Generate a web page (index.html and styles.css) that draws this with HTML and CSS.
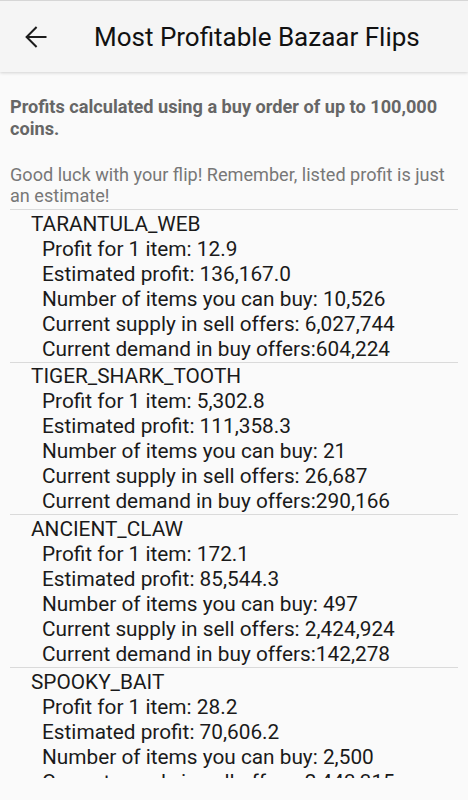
FILE: index.html
```html
<!DOCTYPE html>
<html lang="en">
<head>
<meta charset="utf-8">
<title>Most Profitable Bazaar Flips</title>
<link rel="stylesheet" href="styles.css">
</head>
<body>
<div class="screen">
  <header class="appbar">
    <svg class="back" viewBox="0 0 22 22" width="22" height="22" aria-hidden="true">
      <path d="M21.5 11H1.8M11.6 1L1.6 11l10 10" fill="none" stroke="#1c1c1c" stroke-width="2" stroke-linecap="butt" stroke-linejoin="miter"/>
    </svg>
    <h1 class="title">Most Profitable Bazaar Flips</h1>
  </header>
  <main class="content">
    <p class="note-bold">Profits calculated using a buy order of up to 100,000 coins.</p>
    <p class="note">Good luck with your flip! Remember, listed profit is just an estimate!</p>
    <div class="list">
      <section class="item">
        <div class="name">TARANTULA_WEB</div>
        <div class="line">Profit for 1 item: 12.9</div>
        <div class="line">Estimated profit: 136,167.0</div>
        <div class="line">Number of items you can buy: 10,526</div>
        <div class="line">Current supply in sell offers: 6,027,744</div>
        <div class="line">Current demand in buy offers:604,224</div>
      </section>
      <section class="item">
        <div class="name">TIGER_SHARK_TOOTH</div>
        <div class="line">Profit for 1 item: 5,302.8</div>
        <div class="line">Estimated profit: 111,358.3</div>
        <div class="line">Number of items you can buy: 21</div>
        <div class="line">Current supply in sell offers: 26,687</div>
        <div class="line">Current demand in buy offers:290,166</div>
      </section>
      <section class="item">
        <div class="name">ANCIENT_CLAW</div>
        <div class="line">Profit for 1 item: 172.1</div>
        <div class="line">Estimated profit: 85,544.3</div>
        <div class="line">Number of items you can buy: 497</div>
        <div class="line">Current supply in sell offers: 2,424,924</div>
        <div class="line">Current demand in buy offers:142,278</div>
      </section>
      <section class="item">
        <div class="name">SPOOKY_BAIT</div>
        <div class="line">Profit for 1 item: 28.2</div>
        <div class="line">Estimated profit: 70,606.2</div>
        <div class="line">Number of items you can buy: 2,500</div>
        <div class="line">Current supply in sell offers: 2,443,315</div>
        <div class="line">Current demand in buy offers:116,402</div>
      </section>
    </div>
  </main>
</div>
</body>
</html>
```
FILE: styles.css
```css
* { box-sizing: border-box; }
html, body {
  margin: 0;
  padding: 0;
  background: #fafafa;
}
body {
  font-family: Roboto, "Noto Sans", "Liberation Sans", sans-serif;
  color: #212121;
}
.screen {
  width: 468px;
  height: 800px;
  display: flex;
  flex-direction: column;
  overflow: hidden;
  background: #fafafa;
  border-top: 1px solid #d6d6d6;
}
.appbar {
  flex: none;
  height: 71px;
  background: #f5f5f5;
  display: flex;
  align-items: center;
  padding-left: 25px;
  box-shadow: 0 1px 3px rgba(0,0,0,0.16);
  position: relative;
  z-index: 1;
}
.back {
  width: 22px;
  height: 22px;
  flex: none;
}
.title {
  margin: 0 0 0 47px;
  font-size: 26px;
  font-weight: 400;
  color: #111;
  line-height: 30px;
  padding-top: 1px;
}
.content {
  flex: 1;
  min-height: 0;
  padding: 24px 10px 22px 10px;
  display: flex;
  flex-direction: column;
}
.note-bold {
  margin: 0;
  font-size: 18.15px;
  line-height: 21.5px;
  font-weight: 700;
  color: #666;
}
.note {
  margin: 25px 0 0 0;
  font-size: 18.1px;
  line-height: 21px;
  color: #777;
}
.list {
  flex: 1;
  min-height: 0;
  overflow: hidden;
  margin-top: 3px;
}
.item {
  border-top: 1px solid #dadada;
  padding: 1.67px 0 0 21px;
}
.name, .line {
  font-size: 20.8px;
  line-height: 25px;
  color: #1a1a1a;
  white-space: nowrap;
}
.line {
  padding-left: 11px;
}
```
